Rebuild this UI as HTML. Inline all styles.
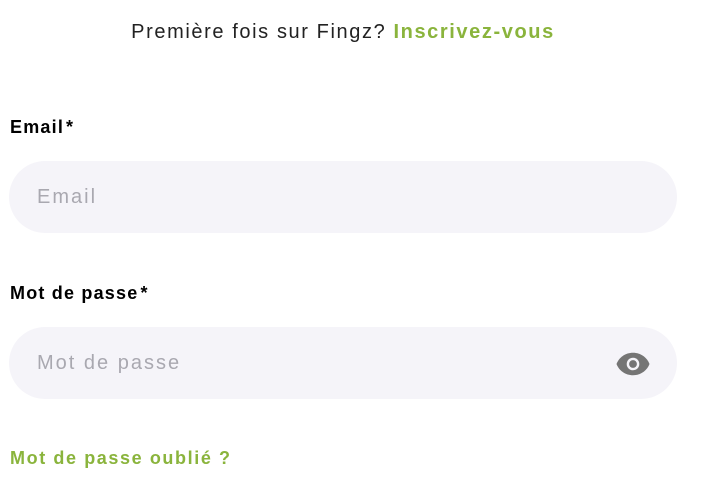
<!DOCTYPE html>
<html><head><style>
body{margin:0;width:707px;height:500px;background:#fff;font-family:"Liberation Sans",sans-serif;position:relative;overflow:hidden}
.top{position:absolute;top:21px;left:0;width:686px;text-align:center;font-size:20px;color:#222;letter-spacing:1.6px}
.top b{color:#8ab43c}
.lab{position:absolute;left:10px;font-size:18px;font-weight:bold;color:#000;letter-spacing:1.2px}
.in{position:absolute;left:9px;width:668px;height:72px;border-radius:36px;background:#f5f4f9}
.ph{position:absolute;left:28px;top:25px;font-size:20px;color:#a9a8b0;letter-spacing:2px}
.fg{position:absolute;left:10px;top:448px;font-size:18px;font-weight:bold;color:#8ab43c;letter-spacing:1.6px}
</style></head><body>
<div class="top">Première fois sur Fingz? <b>Inscrivez-vous</b></div>
<div class="lab" style="top:117px">Email<span style="margin-left:2px">*</span></div>
<div class="in" style="top:161px"><div class="ph">Email</div></div>
<div class="lab" style="top:283px">Mot de passe<span style="margin-left:2px">*</span></div>
<div class="in" style="top:327px"><div class="ph">Mot de passe</div>
<svg style="position:absolute;left:606px;top:24px" width="36" height="26" viewBox="0 0 24 17"><path d="M12 1C7 1 2.7 4 1 8.5 2.7 13 7 16 12 16s9.3-3 11-7.5C21.3 4 17 1 12 1z" fill="#757575"/><circle cx="12" cy="8.5" r="4.2" fill="#f5f4f9"/><circle cx="12" cy="8.5" r="2.6" fill="#757575"/></svg></div>
<div class="fg">Mot de passe oublié ?</div>
</body></html>
